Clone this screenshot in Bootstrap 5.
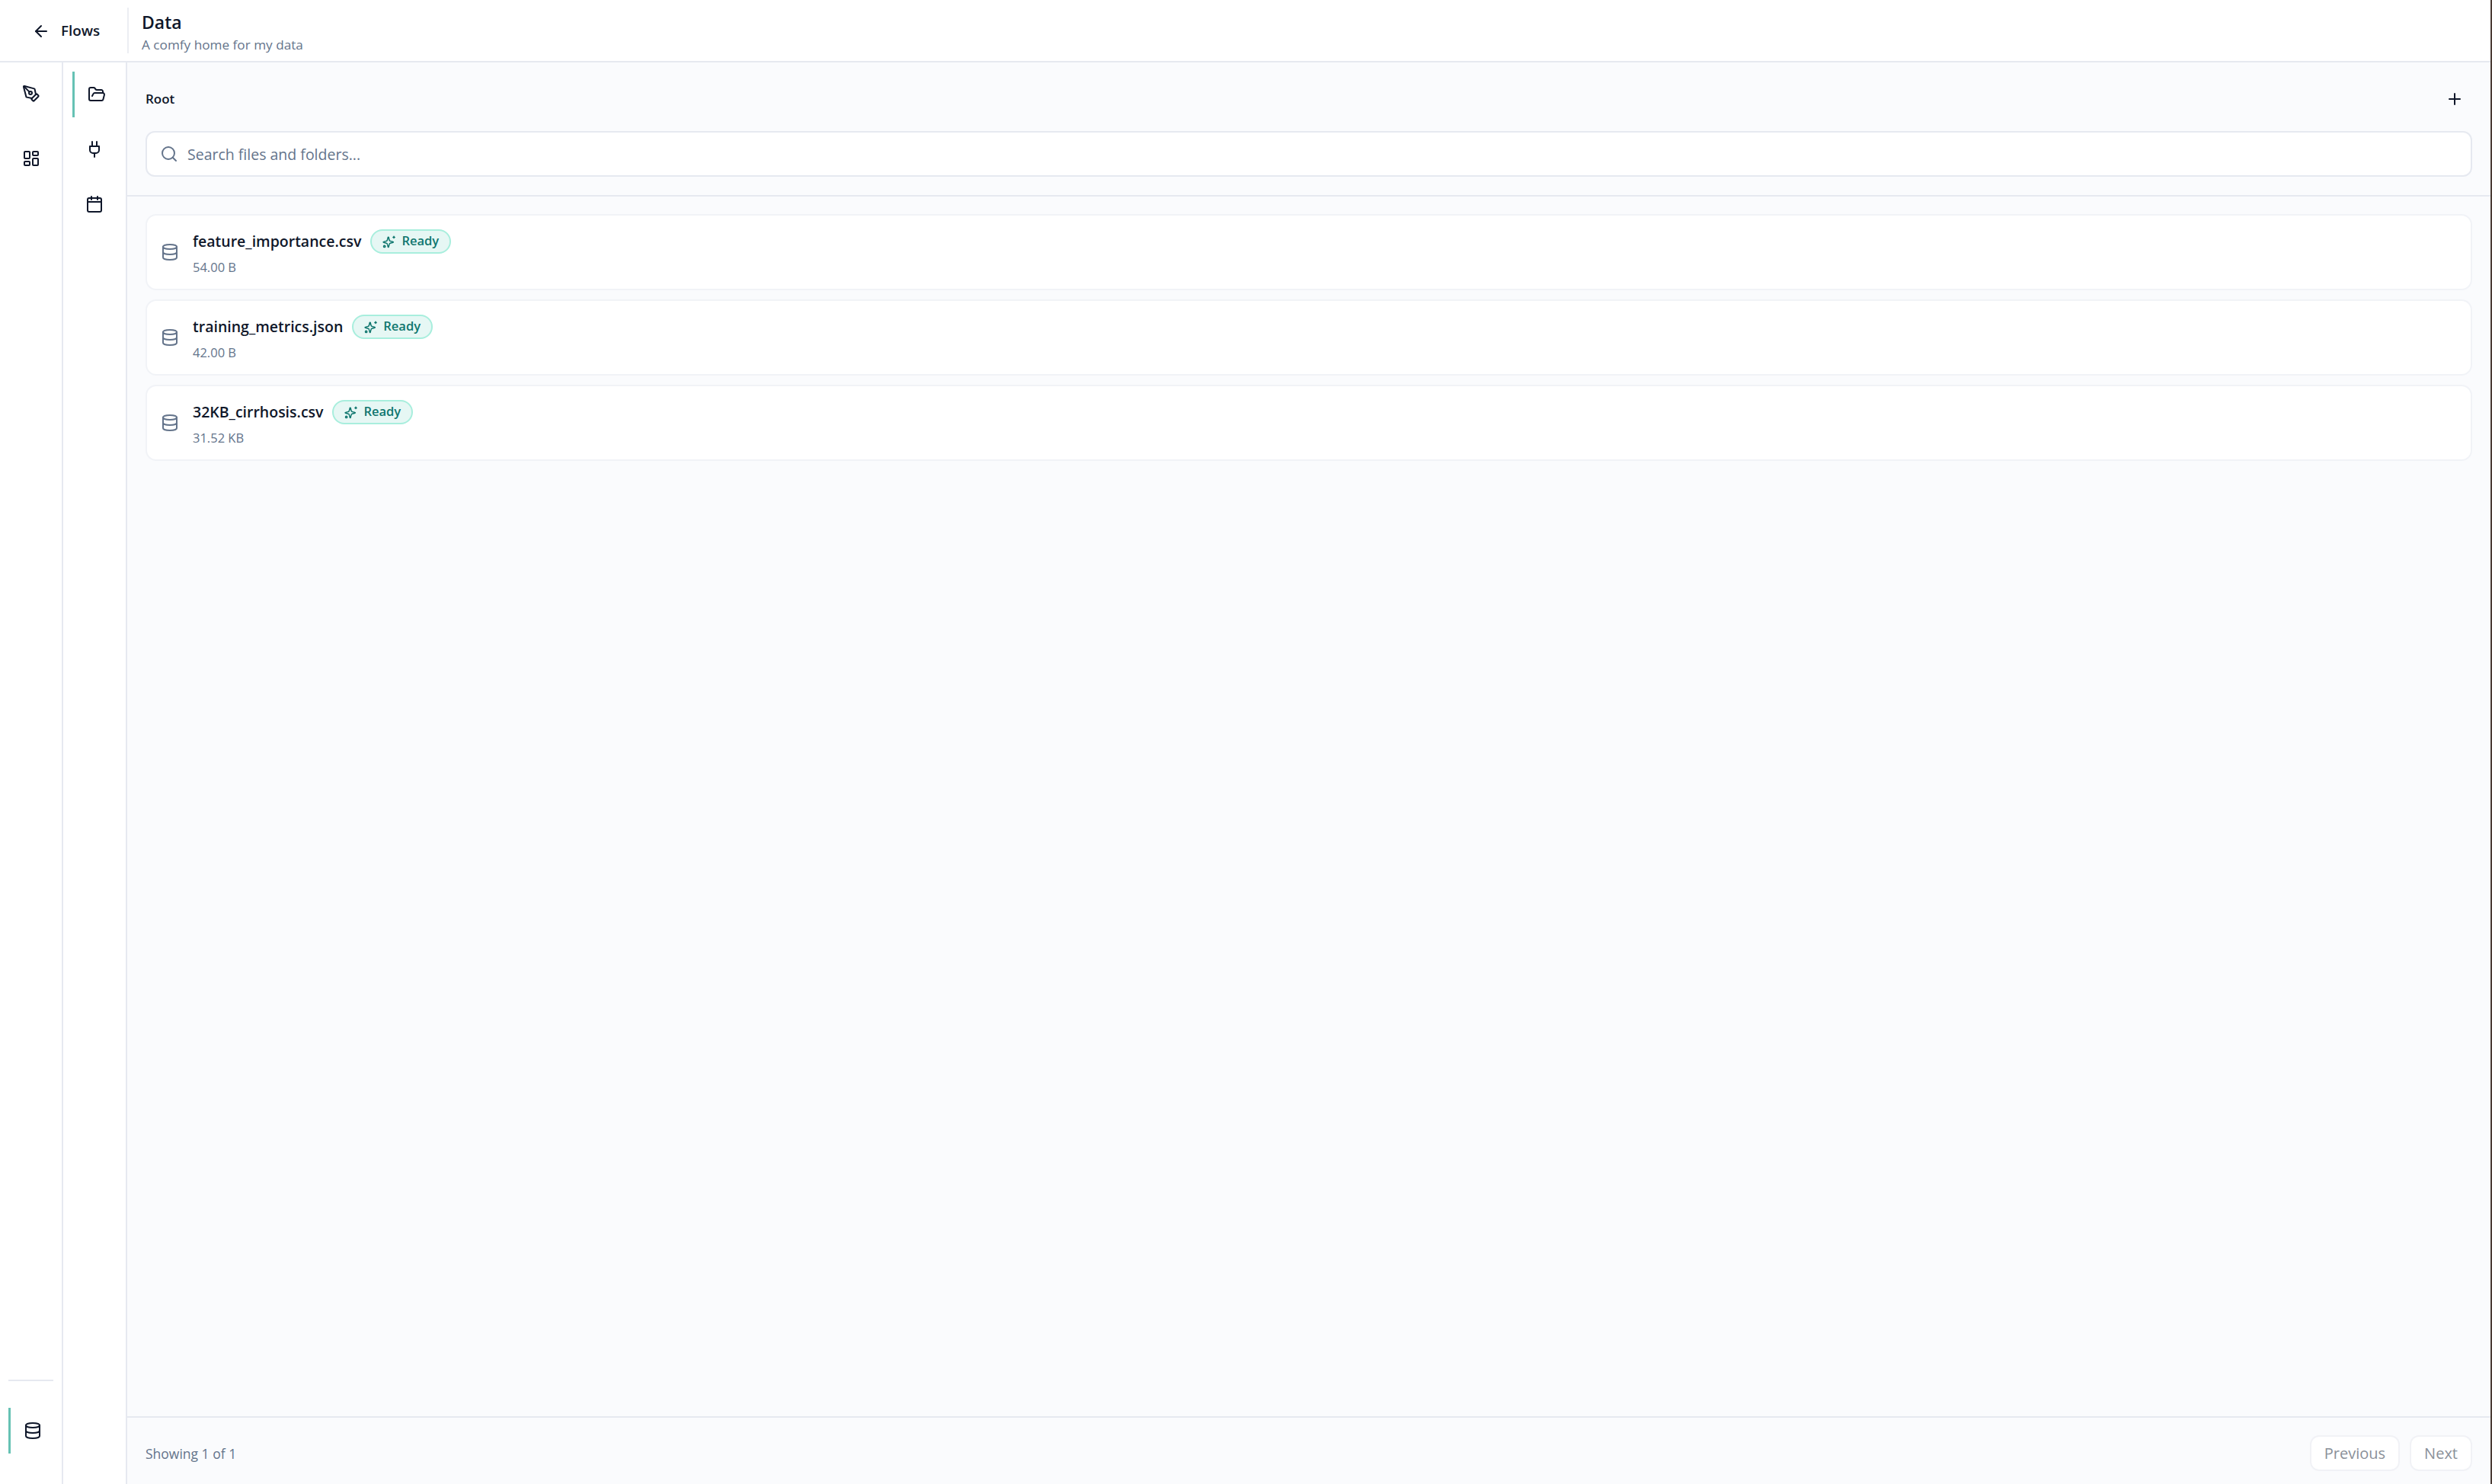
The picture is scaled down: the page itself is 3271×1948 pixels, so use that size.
<!DOCTYPE html>
<html lang="en">
<head>
    <meta charset="UTF-8">
    <title>Data</title>
    <link href="https://cdn.jsdelivr.net/npm/bootstrap@5.3.0/dist/css/bootstrap.min.css" rel="stylesheet">
    <style>
        html, body { height: 100%; }
        body {
            font-family: "Open Sans", "Noto Sans", sans-serif;
            background: #fff;
            color: #0f172a;
            overflow: hidden;
            border-right: 2px solid #4a3b35;
        }
        svg.ico {
            fill: none;
            stroke: currentColor;
            stroke-width: 2;
            stroke-linecap: round;
            stroke-linejoin: round;
            flex: none;
            display: block;
        }
        .app-shell { height: 100vh; }
        .top-bar { height: 82px; border-bottom: 2px solid #e6e9f0; }
        .back-area { width: 167px; padding-left: 42px; gap: 14px; font-size: 18.8px; font-weight: 600; padding-top: 1px; }
        .title-area { border-left: 2px solid #eceef3; height: 60px; padding: 3px 0 0 17px; }
        .page-title { font-size: 23px; font-weight: 600; line-height: 32px; }
        .page-sub { font-size: 17.2px; line-height: 27px; color: #64748b; }
        .rail-one { width: 83px; border-right: 2px solid #e6e9f0; padding-top: 11px; }
        .rail-two { width: 84px; border-right: 2px solid #e6e9f0; padding-top: 12px; gap: 12px; }
        .rail-item { height: 60px; flex-shrink: 0; }
        .pen-item { margin-bottom: 25px; }
        .rail-active { border-left: 3px solid #66c2b4; }
        .rail-active-one { margin: 0 9px 40px 11px; }
        .rail-active-two { margin: 0 9px 0 12px; }
        .rail-sep { border-top: 2px solid #e6e9f0; margin: 0 11px 35px; }
        .main-pane { background: #fafbfd; min-width: 0; }
        .root-row { height: 90px; padding: 6px 35px 0 24px; }
        .root-label { font-size: 17px; font-weight: 600; }
        .search-wrap { padding: 0 24px 24px; border-bottom: 2px solid #e6e9f0; }
        .search-box { height: 60px; background: #fff; border: 2px solid #e6e9f0; border-radius: 12px; padding: 0 17px; gap: 12px; color: #64748b; font-size: 19.5px; }
        .search-text { padding-top: 2px; }
        .file-list { padding: 23px 24px 0; gap: 12px; }
        .file-row { height: 100px; background: #fff; border: 2px solid #f1f3f7; border-radius: 14px; padding: 0 18px; gap: 18px; }
        .file-name { font-size: 19.5px; font-weight: 600; line-height: 28px; }
        .file-size { font-size: 16.5px; line-height: 22px; color: #64748b; margin-top: 7px; }
        .db-ico { color: #64748b; }
        .ready-pill { height: 32px; padding: 0 14px; gap: 7px; background: #e6f7f4; border: 2px solid #a8eedd; border-radius: 16px; color: #0f766e; font-size: 16.5px; font-weight: 600; }
        .name-line { gap: 12px; }
        .foot-bar { height: 89px; border-top: 2px solid #e6e9f0; padding: 6px 24px 0; color: #64748b; font-size: 17.5px; }
        .foot-text { padding-top: 2px; }
        .page-btn { height: 47px; background: #fff; border: 2px solid #f1f2f6; border-radius: 12px; padding: 0 17px; color: #8a9099; font-size: 20px; font-weight: 500; }
        .btn-gap { gap: 13px; }
    </style>
</head>
<body>
    <div class="app-shell d-flex flex-column">
        <!-- шапка -->
        <div class="top-bar d-flex align-items-center flex-shrink-0">
            <div class="back-area d-flex align-items-center">
                <svg class="ico" width="24" height="24" viewBox="0 0 24 24"><path d="m12 19-7-7 7-7"/><path d="M19 12H5"/></svg>
                <span>Flows</span>
            </div>
            <div class="title-area">
                <div class="page-title">Data</div>
                <div class="page-sub">A comfy home for my data</div>
            </div>
        </div>

        <div class="d-flex flex-grow-1" style="min-height:0">
            <!-- левые панели -->
            <div class="rail-one d-flex flex-column flex-shrink-0">
                <div class="rail-item pen-item d-flex align-items-center justify-content-center">
                    <svg class="ico" width="24" height="24" viewBox="0 0 24 24"><path d="M15.707 21.293a1 1 0 0 1-1.414 0l-1.586-1.586a1 1 0 0 1 0-1.414l5.586-5.586a1 1 0 0 1 1.414 0l1.586 1.586a1 1 0 0 1 0 1.414z"/><path d="m18 13-1.375-6.874a1 1 0 0 0-.746-.776L3.235 2.028a1 1 0 0 0-1.207 1.207L5.35 15.879a1 1 0 0 0 .776.746L13 18"/><path d="m2.3 2.3 7.286 7.286"/><circle cx="11" cy="11" r="2"/></svg>
                </div>
                <div class="rail-item d-flex align-items-center justify-content-center">
                    <svg class="ico" width="24" height="24" viewBox="0 0 24 24"><rect width="7" height="9" x="3" y="3" rx="1"/><rect width="7" height="5" x="14" y="3" rx="1"/><rect width="7" height="9" x="14" y="12" rx="1"/><rect width="7" height="5" x="3" y="16" rx="1"/></svg>
                </div>
                <div class="rail-sep mt-auto"></div>
                <div class="rail-item rail-active rail-active-one d-flex align-items-center justify-content-center">
                    <svg class="ico" width="24" height="24" viewBox="0 0 24 24"><ellipse cx="12" cy="5" rx="9" ry="3"/><path d="M3 5V19A9 3 0 0 0 21 19V5"/><path d="M3 12A9 3 0 0 0 21 12"/></svg>
                </div>
            </div>
            <div class="rail-two d-flex flex-column flex-shrink-0">
                <div class="rail-item rail-active rail-active-two d-flex align-items-center justify-content-center">
                    <svg class="ico" width="24" height="24" viewBox="0 0 24 24"><path d="m6 14 1.5-2.9A2 2 0 0 1 9.24 10H20a2 2 0 0 1 1.94 2.5l-1.54 6a2 2 0 0 1-1.95 1.5H4a2 2 0 0 1-2-2V5a2 2 0 0 1 2-2h3.9a2 2 0 0 1 1.69.9l.81 1.2a2 2 0 0 0 1.67.9H18a2 2 0 0 1 2 2v2"/></svg>
                </div>
                <div class="rail-item d-flex align-items-center justify-content-center">
                    <svg class="ico" width="24" height="24" viewBox="0 0 24 24"><path d="M12 22v-5"/><path d="M9 8V2"/><path d="M15 8V2"/><path d="M18 8v5a4 4 0 0 1-4 4h-4a4 4 0 0 1-4-4V8Z"/></svg>
                </div>
                <div class="rail-item d-flex align-items-center justify-content-center">
                    <svg class="ico" width="24" height="24" viewBox="0 0 24 24"><path d="M8 2v4"/><path d="M16 2v4"/><rect width="18" height="18" x="3" y="4" rx="2"/><path d="M3 9h18"/></svg>
                </div>
            </div>

            <!-- основная часть -->
            <div class="main-pane d-flex flex-column flex-grow-1">
                <div class="root-row d-flex align-items-center justify-content-between flex-shrink-0">
                    <span class="root-label">Root</span>
                    <svg class="ico" width="24" height="24" viewBox="0 0 24 24"><path d="M5 12h14"/><path d="M12 5v14"/></svg>
                </div>
                <div class="search-wrap flex-shrink-0">
                    <div class="search-box d-flex align-items-center">
                        <svg class="ico" width="24" height="24" viewBox="0 0 24 24"><circle cx="11" cy="11" r="8"/><path d="m21 21-4.3-4.3"/></svg>
                        <span class="search-text">Search files and folders...</span>
                    </div>
                </div>
                <div class="file-list d-flex flex-column flex-grow-1" id="files"></div>
                <div class="foot-bar d-flex align-items-center justify-content-between flex-shrink-0">
                    <span class="foot-text">Showing 1 of 1</span>
                    <div class="d-flex btn-gap">
                        <button class="page-btn" type="button" disabled>Previous</button>
                        <button class="page-btn" type="button" disabled>Next</button>
                    </div>
                </div>
            </div>
        </div>
    </div>

    <script src="https://cdn.jsdelivr.net/npm/bootstrap@5.3.0/dist/js/bootstrap.bundle.min.js"></script>
    <script>
        const files = [
            { name: 'feature_importance.csv', size: '54.00 B' },
            { name: 'training_metrics.json', size: '42.00 B' },
            { name: '32KB_cirrhosis.csv', size: '31.52 KB' }
        ];
        document.getElementById('files').innerHTML = files.map(f => `
            <div class="file-row d-flex align-items-center flex-shrink-0">
                <svg class="ico db-ico" width="24" height="24" viewBox="0 0 24 24"><ellipse cx="12" cy="5" rx="9" ry="3"/><path d="M3 5V19A9 3 0 0 0 21 19V5"/><path d="M3 12A9 3 0 0 0 21 12"/></svg>
                <div>
                    <div class="name-line d-flex align-items-center">
                        <span class="file-name">${f.name}</span>
                        <span class="ready-pill d-inline-flex align-items-center">
                            <svg class="ico" width="18" height="18" viewBox="0 0 24 24"><path d="M8.5 16.5A2 2 0 0 0 7 15l-5-1.4a.5.5 0 0 1 0-1L7 11.200a2 2 0 0 0 1.500-1.500l1.300-5a.5.5 0 0 1 1 0l1.300 5a2 2 0 0 0 1.500 1.500l5 1.400a.5.5 0 0 1 0 1l-5 1.400a2 2 0 0 0-1.500 1.500l-1.300 5a.5.5 0 0 1-1 0z"/><path d="M20 3v3"/><path d="M21.500 4.500h-3"/><circle cx="3.500" cy="20.500" r="1.500"/></svg>
                            Ready
                        </span>
                    </div>
                    <div class="file-size">${f.size}</div>
                </div>
            </div>`).join('');
    </script>
</body>
</html>
